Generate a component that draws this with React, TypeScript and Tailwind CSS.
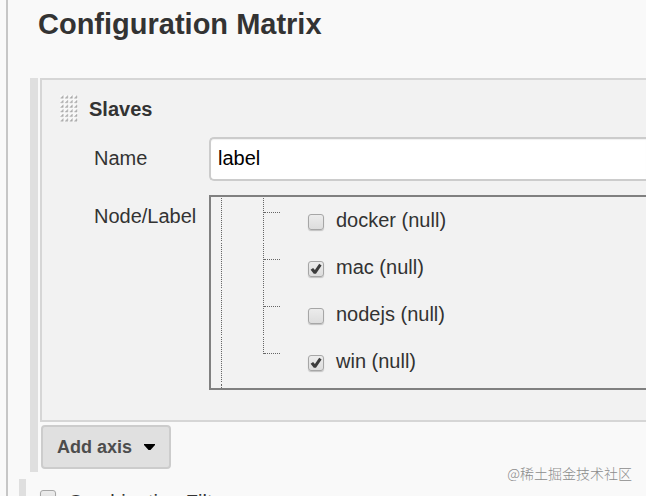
const nodes = [
  { name: "docker", checked: false },
  { name: "mac", checked: true },
  { name: "nodejs", checked: false },
  { name: "win", checked: true },
];

const gripCols = [0, 1, 2, 3];
const gripRows = [0, 1, 2, 3, 4, 5];

function Checkbox({ id, checked = false }: { id: string; checked?: boolean }) {
  return (
    <span className="relative block size-4 shrink-0">
      <input
        id={id}
        type="checkbox"
        defaultChecked={checked}
        className="peer block size-4 appearance-none rounded-[3px] border border-[#a6a6a6] bg-linear-to-b from-[#ececec] to-[#dddddd] shadow-[0_1px_1px_rgba(0,0,0,0.2)]"
      />
      <svg
        viewBox="0 0 16 16"
        className="pointer-events-none absolute inset-0 hidden size-4 peer-checked:block"
        aria-hidden="true"
      >
        <path d="M2.6 8.8 5.1 6.9 6.9 8.9 11.2 2.8 13.6 4.4 8 12.8 5.8 12.8Z" fill="#3c3c3c" />
      </svg>
    </span>
  );
}

function DragHandle() {
  return (
    <svg width="18" height="27" viewBox="0 0 18 27" aria-hidden="true">
      <rect width="18" height="27" fill="#f8f8f8" />
      {gripRows.map((row) =>
        gripCols.map((col) => (
          <path
            key={`${row}-${col}`}
            d="M0.6 3.2 3.2 0.6V3.2Z"
            transform={`translate(${col * 4.6} ${row * 4.6})`}
            fill="#a4a4a4"
            stroke="#bcbcbc"
            strokeWidth="0.6"
          />
        ))
      )}
    </svg>
  );
}

// Dotted guides to the left of one tree entry
function Branch({ last }: { last: boolean }) {
  return (
    <div className="flex w-[97px] shrink-0 pl-2.5" aria-hidden="true">
      <div className="mb-0.5 w-[42px] border-l border-dotted border-[#666666]" />
      <div className={last ? "h-[17px] w-[17px] border-l border-dotted border-[#666666]" : "mb-0.5 w-[17px] border-l border-dotted border-[#666666]"}>
        <div className="h-[17px] border-b border-dotted border-[#666666]" />
      </div>
    </div>
  );
}

function NodeTree() {
  return (
    <ul className="min-w-0 flex-1 overflow-hidden border-y-2 border-l-2 border-[#808080]">
      {nodes.map((node, idx) => (
        <li key={node.name} className="flex h-[47px] first:-mt-px">
          <Branch last={idx === nodes.length - 1} />
          <div className="flex items-start">
            <div className="pt-[18px]">
              <Checkbox id={`node-${node.name}`} checked={node.checked} />
            </div>
            <label htmlFor={`node-${node.name}`} className="pt-3 pl-3 leading-6">
              {node.name} (null)
            </label>
          </div>
        </li>
      ))}
      <li className="h-1 pl-2.5" aria-hidden="true">
        <div className="h-full border-l border-dotted border-[#666666]" />
      </li>
    </ul>
  );
}

export default function App() {
  return (
    <main className="relative h-screen overflow-hidden bg-[#f9f9f9] pl-1.5 font-['Liberation_Sans',Arial,sans-serif] text-[20px] text-[#333333]">
      <div className="min-h-full border-l-2 border-[#c6c6c6]">
        <h1 className="pt-1 pl-[30px] text-[29px] leading-10 font-bold">Configuration Matrix</h1>

        <section className="mt-[34px] ml-[22px] border-l-8 border-[#dfdfdf] pl-0.5">
          <div className="border-y-2 border-l-2 border-[#d6d6d6] bg-[#f2f2f2] pb-[30px] pl-[18px]">
            <div className="flex h-[57px] items-center gap-[11px]">
              <DragHandle />
              <h2 className="leading-6 font-bold">Slaves</h2>
            </div>

            <div className="flex pl-[34px]">
              <label htmlFor="axis-name" className="w-[115px] shrink-0 pt-[9px] leading-6">
                Name
              </label>
              <input
                id="axis-name"
                type="text"
                defaultValue="label"
                className="h-11 min-w-0 flex-1 rounded-l-[5px] border-y-2 border-l-2 border-[#cccccc] bg-white px-[7px] pb-0.5 text-black shadow-[inset_0_1px_1px_rgba(0,0,0,0.06)]"
              />
            </div>

            <div className="mt-3.5 flex pl-[34px]">
              <div className="w-[115px] shrink-0 pt-[9px] leading-6">Node/Label</div>
              <NodeTree />
            </div>
          </div>

          <div className="flex pt-[3px] pb-[3px] pl-px">
            <button
              type="button"
              className="flex h-11 items-center gap-3 rounded-[4px] border-2 border-[#cccccc] bg-[#e0e0e0] px-3.5 text-[18px] font-bold text-[#4d4d4d]"
            >
              Add axis
              <svg width="11" height="6" viewBox="0 0 11 6" aria-hidden="true">
                <path d="M0 0H11V1L6.5 6H4.5L0 1Z" fill="#000000" />
              </svg>
            </button>
          </div>
        </section>

        <section className="mt-[7px] ml-[11px] flex h-10 items-start border-l-[7px] border-[#dfdfdf] pt-[11px] pl-3.5">
          <Checkbox id="combination-filter" />
          <label htmlFor="combination-filter" className="pl-3 leading-6">
            Combination Filter
          </label>
        </section>
      </div>

      <div className="absolute right-3.5 bottom-[13px] font-['Noto_Sans_CJK_SC',sans-serif] text-[14px] leading-5 font-light text-[#8c8c8c]">
        @稀土掘金技术社区
      </div>
    </main>
  );
}
